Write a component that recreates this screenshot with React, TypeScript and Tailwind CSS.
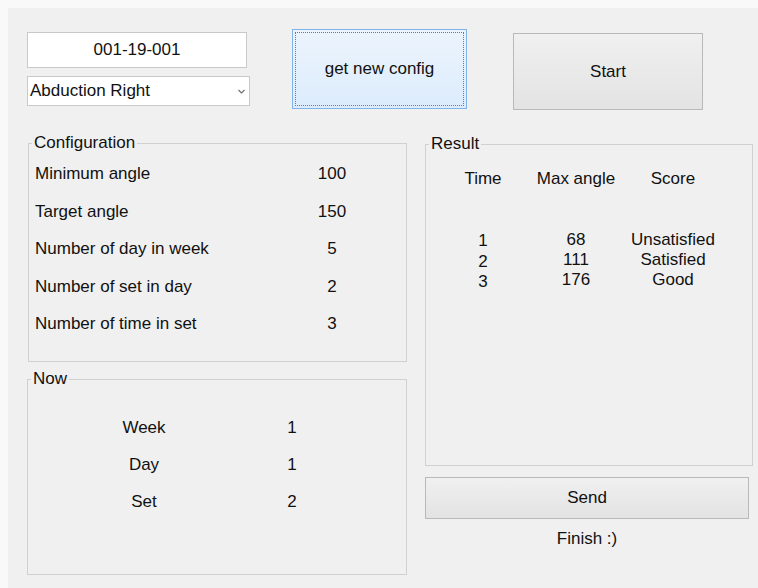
import React from 'react'

const config = [
  { label: 'Minimum angle', value: '100' },
  { label: 'Target angle', value: '150' },
  { label: 'Number of day in week', value: '5' },
  { label: 'Number of set in day', value: '2' },
  { label: 'Number of time in set', value: '3' },
]

const progress = [
  { label: 'Week', value: '1' },
  { label: 'Day', value: '1' },
  { label: 'Set', value: '2' },
]

const results = [
  { time: 1, angle: 68, score: 'Unsatisfied' },
  { time: 2, angle: 111, score: 'Satisfied' },
  { time: 3, angle: 176, score: 'Good' },
]

function GroupBox({ title, className, children }: { title: string; className: string; children: React.ReactNode }) {
  return (
    <fieldset className={`border border-[#d0d0d0] ${className}`}>
      <legend className="ml-[3px] px-[2px] leading-[18px]">{title}</legend>
      {children}
    </fieldset>
  )
}

export default function App() {
  return (
    <div className="h-[588px] w-[758px] overflow-hidden bg-[#f9f9f9] pl-2 pt-2 font-['Liberation_Sans',Arial,sans-serif] text-[17px] text-[#111]">
      <div className="h-full bg-[#f0f0f0] pl-[19px]">
        {/* patient id, exercise picker and the two big buttons */}
        <div className="flex items-start pt-[21px]">
          <div className="mt-[3px] flex w-[223px] flex-col gap-2">
            <div className="flex h-[36px] w-[220px] items-center justify-center border border-[#c9c9c9] bg-white">
              001-19-001
            </div>
            <div className="flex h-[30px] w-[223px] items-center justify-between border border-[#c9c9c9] bg-white pl-[2px] pr-[4px]">
              <span>Abduction Right</span>
              <svg width="7" height="5" viewBox="0 0 7 5" className="text-[#707070]">
                <polyline points="0.5,1 3.5,4 6.5,1" fill="none" stroke="currentColor" strokeWidth="1.2" />
              </svg>
            </div>
          </div>
          <button
            type="button"
            className="relative ml-[42px] h-[80px] w-[175px] border border-[#7eb4ea] bg-gradient-to-b from-[#ecf4fc] to-[#dcecfc]"
          >
            <span className="pointer-events-none absolute inset-[2px] border border-dotted border-[#777]" />
            get new config
          </button>
          <button
            type="button"
            className="ml-[46px] mt-[4px] h-[77px] w-[190px] border border-[#b9b9b9] bg-gradient-to-b from-[#f0f0f0] to-[#e3e3e3]"
          >
            Start
          </button>
        </div>

        <div className="mt-[24px] flex items-start">
          <div className="w-[380px]">
            <GroupBox title="Configuration" className="ml-[1px] h-[228px] w-[379px]">
              <div className="grid grid-cols-[267px_60px] pl-[6px] pt-[3px]">
                {config.map((row) => (
                  <React.Fragment key={row.label}>
                    <div className="flex h-[37.5px] items-center">{row.label}</div>
                    <div className="flex h-[37.5px] items-center justify-center">{row.value}</div>
                  </React.Fragment>
                ))}
              </div>
            </GroupBox>

            <GroupBox title="Now" className="mt-[8px] h-[205px] w-[380px]">
              <div className="grid grid-cols-[80px_60px] gap-x-[78px] pl-[76px] pt-[21px]">
                {progress.map((row) => (
                  <React.Fragment key={row.label}>
                    <div className="flex h-[37px] items-center justify-center">{row.label}</div>
                    <div className="flex h-[37px] items-center justify-center">{row.value}</div>
                  </React.Fragment>
                ))}
              </div>
            </GroupBox>
          </div>

          <div className="ml-[18px] mt-[1px] w-[328px]">
            <GroupBox title="Result" className="h-[331px] w-[328px]">
              <div className="pl-[17px] pt-[16px]">
                <div className="grid grid-cols-[80px_106px_88px] text-center leading-[20px]">
                  <div>Time</div>
                  <div>Max angle</div>
                  <div>Score</div>
                </div>
                <div className="mt-[41px] grid grid-cols-[80px_106px_88px] text-center leading-[20px]">
                  <div>
                    {results.map((r) => (
                      <div key={r.time} className="pt-[2px] leading-[18.5px]">{r.time}</div>
                    ))}
                  </div>
                  <div>
                    {results.map((r) => (
                      <div key={r.time} className="leading-[20px]">{r.angle}</div>
                    ))}
                  </div>
                  <div>
                    {results.map((r) => (
                      <div key={r.time} className="leading-[20px]">{r.score}</div>
                    ))}
                  </div>
                </div>
              </div>
            </GroupBox>

            <button
              type="button"
              className="mt-[11px] h-[42px] w-[324px] border border-[#b9b9b9] bg-gradient-to-b from-[#f0f0f0] to-[#e3e3e3]"
            >
              Send
            </button>
            <div className="mt-[10px] w-[324px] text-center leading-[20px]">Finish :)</div>
          </div>
        </div>
      </div>
    </div>
  )
}
